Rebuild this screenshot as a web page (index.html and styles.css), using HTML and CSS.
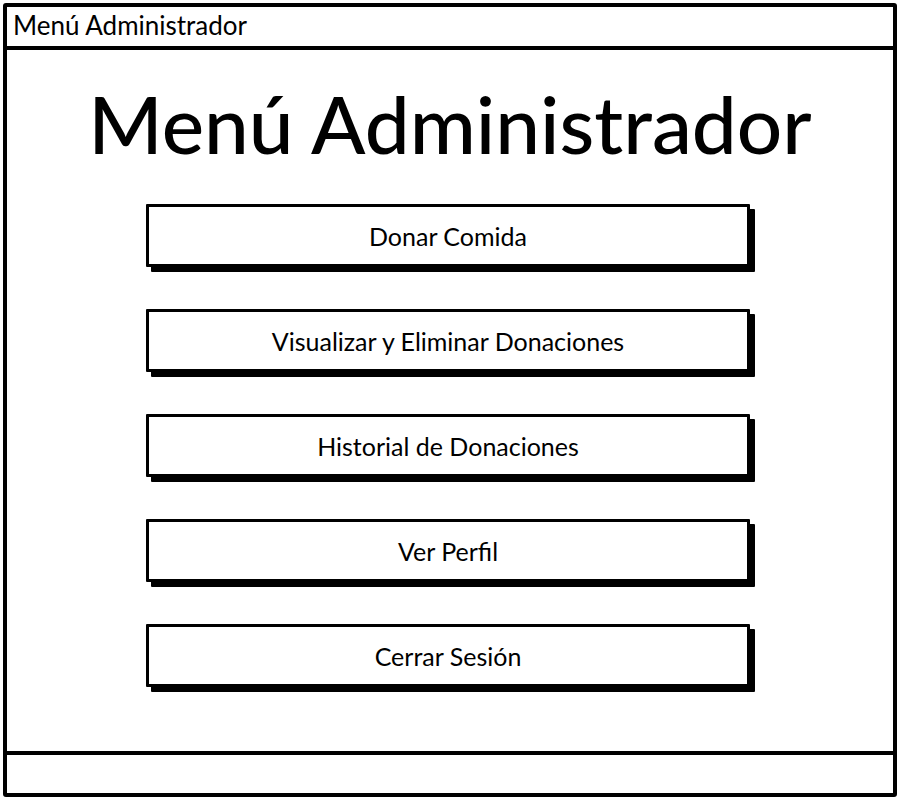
FILE: index.html
```html
<!DOCTYPE html>
<html lang="es">
<head>
  <meta charset="UTF-8">
  <title>Menú Administrador</title>
  <link rel="stylesheet" href="styles.css">
</head>
<body>
  <div class="window">
    <div class="title-bar">Menú Administrador</div>
    <div class="window-body">
      <h1 class="page-title">Menú Administrador</h1>
      <div class="menu-list">
        <button class="menu-button">Donar Comida</button>
        <button class="menu-button">Visualizar y Eliminar Donaciones</button>
        <button class="menu-button">Historial de Donaciones</button>
        <button class="menu-button">Ver Perfil</button>
        <button class="menu-button">Cerrar Sesión</button>
      </div>
    </div>
    <div class="status-bar"></div>
  </div>
</body>
</html>
```

FILE: styles.css
```css
* {
  box-sizing: border-box;
}

body {
  margin: 0;
  background: #fff;
  font-family: Lato, "Open Sans", sans-serif;
  color: #000;
}

.window {
  width: 894px;
  height: 794px;
  margin: 3px;
  border: 4px solid #000;
  border-radius: 3px;
  display: flex;
  flex-direction: column;
}

.title-bar {
  height: 43px;
  padding: 3px 0 0 6px;
  border-bottom: 4px solid #000;
  font-size: 26px;
  line-height: 30px;
}

.window-body {
  flex: 1;
  display: flex;
  flex-direction: column;
  align-items: center;
}

.page-title {
  margin: 28px 0 0;
  font-size: 80px;
  font-weight: 500;
  line-height: 90px;
}

.menu-list {
  margin: 36px 4px 0 0;
  display: flex;
  flex-direction: column;
  gap: 42px;
}

.menu-button {
  width: 604px;
  height: 63px;
  border: 3px solid #000;
  border-radius: 1px;
  background: #fff;
  box-shadow: 5px 5px 0 #000;
  font-family: inherit;
  font-size: 25px;
  color: #000;
  cursor: pointer;
}

.status-bar {
  height: 42px;
  border-top: 4px solid #000;
}
```
